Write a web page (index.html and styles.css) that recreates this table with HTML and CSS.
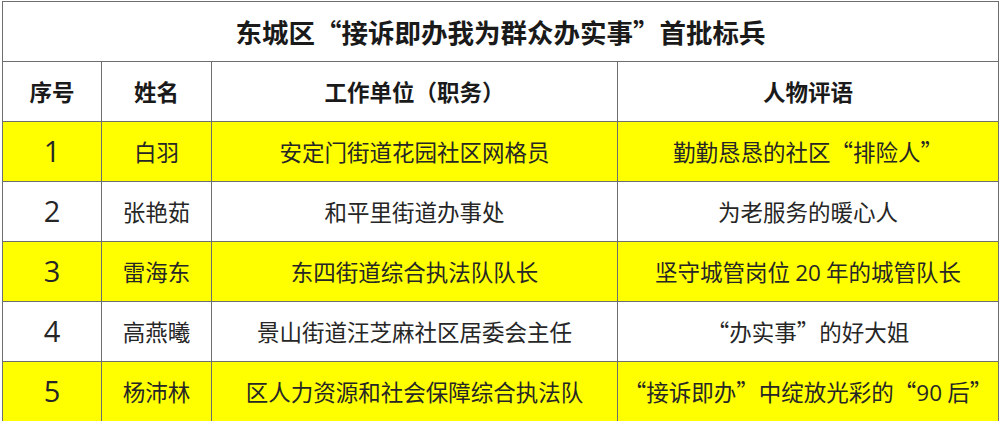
FILE: index.html
```html
<!DOCTYPE html>
<html lang="zh">
<head>
<meta charset="utf-8">
<link rel="stylesheet" href="styles.css">
</head>
<body>
<table class="roster">
  <colgroup>
    <col class="c-no"><col class="c-name"><col class="c-unit"><col class="c-note">
  </colgroup>
  <tr class="title-row"><th colspan="4">东城区“接诉即办我为群众办实事”首批标兵</th></tr>
  <tr class="head-row"><th>序号</th><th>姓名</th><th>工作单位（职务）</th><th>人物评语</th></tr>
  <tr class="hl"><td class="num">1</td><td>白羽</td><td>安定门街道花园社区网格员</td><td>勤勤恳恳的社区“排险人”</td></tr>
  <tr><td class="num">2</td><td>张艳茹</td><td>和平里街道办事处</td><td>为老服务的暖心人</td></tr>
  <tr class="hl"><td class="num">3</td><td>雷海东</td><td>东四街道综合执法队队长</td><td>坚守城管岗位 <span class="digits">20</span> 年的城管队长</td></tr>
  <tr><td class="num">4</td><td>高燕曦</td><td>景山街道汪芝麻社区居委会主任</td><td>“办实事”的好大姐</td></tr>
  <tr class="hl"><td class="num">5</td><td>杨沛林</td><td>区人力资源和社会保障综合执法队</td><td>“接诉即办”中绽放光彩的“<span class="digits">90</span> 后”</td></tr>
</table>
</body>
</html>
```
FILE: styles.css
```css
html, body {
  margin: 0;
  padding: 0;
  background: #ffffff;
}
body {
  padding: 1px 0 0 2px;
  font-family: "Noto Sans CJK SC", "Noto Sans", sans-serif;
  color: #222222;
}
.roster {
  border-collapse: collapse;
  width: 996px;
  table-layout: fixed;
}
.c-no { width: 99px; }
.c-name { width: 110px; }
.c-unit { width: 406px; }
.c-note { width: 381px; }
.roster th, .roster td {
  border: 1px solid #6e6e6e;
  height: 59px;
  padding: 0;
  text-align: center;
  vertical-align: middle;
  line-height: 1.2;
}
.title-row th {
  font-size: 26.5px;
  font-weight: 700;
  color: #1a1a1a;
}
.head-row th {
  font-size: 22.5px;
  font-weight: 700;
  color: #1a1a1a;
}
.roster td {
  font-size: 22.5px;
  font-weight: 400;
  color: #262626;
}
.roster td.num {
  font-family: "Open Sans", "Liberation Sans", sans-serif;
  font-size: 29px;
}
.digits {
  font-family: "Open Sans", "Liberation Sans", sans-serif;
}
.hl td {
  background: #ffff00;
}
```
